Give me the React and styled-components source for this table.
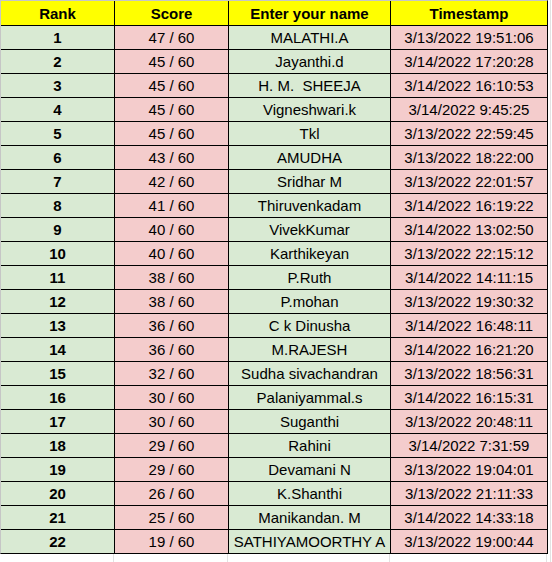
import React from "react";
import styled, { createGlobalStyle } from "styled-components";

const rows = [
  [1, "47 / 60", "MALATHI.A", "3/13/2022 19:51:06"],
  [2, "45 / 60", "Jayanthi.d", "3/14/2022 17:20:28"],
  [3, "45 / 60", "H. M.  SHEEJA", "3/14/2022 16:10:53"],
  [4, "45 / 60", "Vigneshwari.k", "3/14/2022 9:45:25"],
  [5, "45 / 60", "Tkl", "3/13/2022 22:59:45"],
  [6, "43 / 60", "AMUDHA", "3/13/2022 18:22:00"],
  [7, "42 / 60", "Sridhar M", "3/13/2022 22:01:57"],
  [8, "41 / 60", "Thiruvenkadam", "3/14/2022 16:19:22"],
  [9, "40 / 60", "VivekKumar", "3/14/2022 13:02:50"],
  [10, "40 / 60", "Karthikeyan", "3/13/2022 22:15:12"],
  [11, "38 / 60", "P.Ruth", "3/14/2022 14:11:15"],
  [12, "38 / 60", "P.mohan", "3/13/2022 19:30:32"],
  [13, "36 / 60", "C k Dinusha", "3/14/2022 16:48:11"],
  [14, "36 / 60", "M.RAJESH", "3/14/2022 16:21:20"],
  [15, "32 / 60", "Sudha sivachandran", "3/13/2022 18:56:31"],
  [16, "30 / 60", "Palaniyammal.s", "3/14/2022 16:15:31"],
  [17, "30 / 60", "Suganthi", "3/13/2022 20:48:11"],
  [18, "29 / 60", "Rahini", "3/14/2022 7:31:59"],
  [19, "29 / 60", "Devamani N", "3/13/2022 19:04:01"],
  [20, "26 / 60", "K.Shanthi", "3/13/2022 21:11:33"],
  [21, "25 / 60", "Manikandan. M", "3/14/2022 14:33:18"],
  [22, "19 / 60", "SATHIYAMOORTHY A", "3/13/2022 19:00:44"],
];

const GlobalStyle = createGlobalStyle`
  body {
    margin: 0;
    background: #fff;
    font-family: "Liberation Sans", Arial, sans-serif;
  }
`;

const Page = styled.div`
  display: flex;
  align-items: stretch;
  height: 562px;
  overflow: hidden;
`;

const Column = styled.div`
  display: flex;
  flex-direction: column;
`;

const Sheet = styled.div`
  display: grid;
  grid-template-columns: 113px 113px 161px 156px;
  grid-template-rows: 24px;
  grid-auto-rows: 23px;
  gap: 1px;
  background: #000;
  border-top: 1px solid #c6c6c6;
  border-left: 1px solid #c6c6c6;
  border-right: 1px solid #000;
  border-bottom: 1px solid #000;
`;

const HeadCell = styled.div`
  background: #ffff00;
  display: flex;
  align-items: center;
  justify-content: center;
  font-weight: bold;
  font-size: 15px;
  color: #000;
`;

const Cell = styled.div`
  background: ${(p) => (p.$tone === "green" ? "#d9ead3" : "#f4cccc")};
  display: flex;
  align-items: center;
  justify-content: center;
  font-size: 15px;
  font-weight: ${(p) => (p.$bold ? "bold" : "normal")};
  color: #000;
  white-space: pre;
  overflow: hidden;
`;

const Tail = styled.div`
  display: grid;
  grid-template-columns: 114px 114px 162px 157px;
  flex: 1;
`;

const TailCell = styled.div`
  border-right: 1px solid #e2e2e2;
`;

const Gutter = styled.div`
  width: 2px;
  border-right: 1px solid #e2e2e2;
`;

export default function App() {
  return (
    <>
      <GlobalStyle />
      <Page>
        <Column>
          <Sheet>
            <HeadCell>Rank</HeadCell>
            <HeadCell>Score</HeadCell>
            <HeadCell>Enter your name</HeadCell>
            <HeadCell>Timestamp</HeadCell>
            {rows.map(([rank, score, name, time]) => (
              <React.Fragment key={rank}>
                <Cell $tone="green" $bold>{rank}</Cell>
                <Cell $tone="pink">{score}</Cell>
                <Cell $tone="green">{name}</Cell>
                <Cell $tone="pink">{time}</Cell>
              </React.Fragment>
            ))}
          </Sheet>
          <Tail>
            <TailCell />
            <TailCell />
            <TailCell />
            <TailCell />
          </Tail>
        </Column>
        <Gutter />
      </Page>
    </>
  );
}
